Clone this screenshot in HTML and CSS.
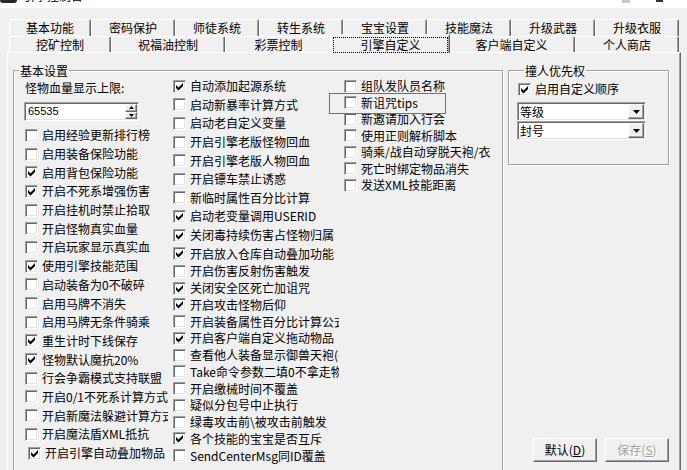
FILE: index.html
```html
<!DOCTYPE html>
<html lang="zh-CN">
<head>
<meta charset="utf-8">
<title>引擎自定义</title>
<link rel="stylesheet" href="styles.css">
</head>
<body>
<div class="titlebar">
  <span class="app-icon"></span>
  <span class="title"><span class="title-text">引擎控制台</span></span>
  <span class="tb-max"></span>
  <span class="tb-close"></span>
</div>

<div class="tabs">
  <div class="tab-row row-back">
    <div class="tab">基本功能</div>
    <div class="tab">密码保护</div>
    <div class="tab">师徒系统</div>
    <div class="tab">转生系统</div>
    <div class="tab">宝宝设置</div>
    <div class="tab">技能魔法</div>
    <div class="tab">升级武器</div>
    <div class="tab">升级衣服</div>
  </div>
  <div class="tab-row row-front">
    <div class="tab">挖矿控制</div>
    <div class="tab">祝福油控制</div>
    <div class="tab">彩票控制</div>
    <div class="tab active"><span class="focus">引擎自定义</span></div>
    <div class="tab">客户端自定义</div>
    <div class="tab">个人商店</div>
  </div>
</div>

<div class="page">
  <fieldset class="group basic">
    <legend>基本设置</legend>
    <div class="cols">
      <div class="col col1">
        <div class="field-label">怪物血量显示上限:</div>
        <div class="spin">
          <span class="spin-value">65535</span>
          <span class="spin-btns">
            <span class="mini-btn"><svg width="5" height="3" viewBox="0 0 5 3"><polygon points="2.5,0 5,3 0,3"/></svg></span>
            <span class="mini-btn"><svg width="5" height="3" viewBox="0 0 5 3"><polygon points="0,0 5,0 2.5,3"/></svg></span>
          </span>
        </div>
        <div class="checks c1">
          <label class="cb"><span class="box"></span><span class="txt">启用经验更新排行榜</span></label>
          <label class="cb"><span class="box"></span><span class="txt">启用装备保险功能</span></label>
          <label class="cb"><span class="box"><svg class="tick" width="11" height="11" viewBox="1 1 11 11"><path d="M3 5 L5.5 7.5 L10 3 L10 6 L5.5 10.5 L3 8 Z"/></svg></span><span class="txt">启用背包保险功能</span></label>
          <label class="cb"><span class="box"><svg class="tick" width="11" height="11" viewBox="1 1 11 11"><path d="M3 5 L5.5 7.5 L10 3 L10 6 L5.5 10.5 L3 8 Z"/></svg></span><span class="txt">开启不死系增强伤害</span></label>
          <label class="cb"><span class="box"></span><span class="txt">开启挂机时禁止拾取</span></label>
          <label class="cb"><span class="box"></span><span class="txt">开启怪物真实血量</span></label>
          <label class="cb"><span class="box"></span><span class="txt">开启玩家显示真实血</span></label>
          <label class="cb"><span class="box"><svg class="tick" width="11" height="11" viewBox="1 1 11 11"><path d="M3 5 L5.5 7.5 L10 3 L10 6 L5.5 10.5 L3 8 Z"/></svg></span><span class="txt">使用引擎技能范围</span></label>
          <label class="cb"><span class="box"></span><span class="txt">启动装备为0不破碎</span></label>
          <label class="cb"><span class="box"></span><span class="txt">启用马牌不消失</span></label>
          <label class="cb"><span class="box"></span><span class="txt">启用马牌无条件骑乘</span></label>
          <label class="cb"><span class="box"><svg class="tick" width="11" height="11" viewBox="1 1 11 11"><path d="M3 5 L5.5 7.5 L10 3 L10 6 L5.5 10.5 L3 8 Z"/></svg></span><span class="txt">重生计时下线保存</span></label>
          <label class="cb"><span class="box"><svg class="tick" width="11" height="11" viewBox="1 1 11 11"><path d="M3 5 L5.5 7.5 L10 3 L10 6 L5.5 10.5 L3 8 Z"/></svg></span><span class="txt">怪物默认魔抗20%</span></label>
          <label class="cb"><span class="box"></span><span class="txt">行会争霸模式支持联盟</span></label>
          <label class="cb"><span class="box"></span><span class="txt">开启0/1不死系计算方式</span></label>
          <label class="cb"><span class="box"></span><span class="txt">开启新魔法躲避计算方式</span></label>
          <label class="cb"><span class="box"></span><span class="txt">开启魔法盾XML抵抗</span></label>
          <label class="cb shifted"><span class="box"><svg class="tick" width="11" height="11" viewBox="1 1 11 11"><path d="M3 5 L5.5 7.5 L10 3 L10 6 L5.5 10.5 L3 8 Z"/></svg></span><span class="txt">开启引擎自动叠加物品</span></label>
        </div>
      </div>

      <div class="col col2">
        <div class="checks c2a">
          <label class="cb"><span class="box"><svg class="tick" width="11" height="11" viewBox="1 1 11 11"><path d="M3 5 L5.5 7.5 L10 3 L10 6 L5.5 10.5 L3 8 Z"/></svg></span><span class="txt">自动添加起源系统</span></label>
          <label class="cb"><span class="box"></span><span class="txt">启动新暴率计算方式</span></label>
          <label class="cb"><span class="box"></span><span class="txt">启动老自定义变量</span></label>
          <label class="cb"><span class="box"></span><span class="txt">开启引擎老版怪物回血</span></label>
          <label class="cb"><span class="box"></span><span class="txt">开启引擎老版人物回血</span></label>
          <label class="cb"><span class="box"></span><span class="txt">开启镖车禁止诱惑</span></label>
          <label class="cb"><span class="box"></span><span class="txt">新临时属性百分比计算</span></label>
          <label class="cb"><span class="box"><svg class="tick" width="11" height="11" viewBox="1 1 11 11"><path d="M3 5 L5.5 7.5 L10 3 L10 6 L5.5 10.5 L3 8 Z"/></svg></span><span class="txt">启动老变量调用USERID</span></label>
          <label class="cb"><span class="box"><svg class="tick" width="11" height="11" viewBox="1 1 11 11"><path d="M3 5 L5.5 7.5 L10 3 L10 6 L5.5 10.5 L3 8 Z"/></svg></span><span class="txt">关闭毒持续伤害占怪物归属</span></label>
          <label class="cb"><span class="box"><svg class="tick" width="11" height="11" viewBox="1 1 11 11"><path d="M3 5 L5.5 7.5 L10 3 L10 6 L5.5 10.5 L3 8 Z"/></svg></span><span class="txt">开启放入仓库自动叠加功能</span></label>
        </div>
        <div class="checks c2b">
          <label class="cb"><span class="box"></span><span class="txt">开启伤害反射伤害触发</span></label>
          <label class="cb"><span class="box"><svg class="tick" width="11" height="11" viewBox="1 1 11 11"><path d="M3 5 L5.5 7.5 L10 3 L10 6 L5.5 10.5 L3 8 Z"/></svg></span><span class="txt">关闭安全区死亡加诅咒</span></label>
          <label class="cb"><span class="box"><svg class="tick" width="11" height="11" viewBox="1 1 11 11"><path d="M3 5 L5.5 7.5 L10 3 L10 6 L5.5 10.5 L3 8 Z"/></svg></span><span class="txt">开启攻击怪物后仰</span></label>
          <label class="cb"><span class="box"></span><span class="txt">开启装备属性百分比计算公式</span></label>
          <label class="cb"><span class="box"><svg class="tick" width="11" height="11" viewBox="1 1 11 11"><path d="M3 5 L5.5 7.5 L10 3 L10 6 L5.5 10.5 L3 8 Z"/></svg></span><span class="txt">开启客户端自定义拖动物品</span></label>
          <label class="cb"><span class="box"></span><span class="txt">查看他人装备显示御兽天袍(衣)</span></label>
          <label class="cb"><span class="box"></span><span class="txt">Take命令参数二填0不拿走物品</span></label>
          <label class="cb"><span class="box"></span><span class="txt">开启缴械时间不覆盖</span></label>
          <label class="cb"><span class="box"></span><span class="txt">疑似分包号中止执行</span></label>
          <label class="cb"><span class="box"></span><span class="txt">绿毒攻击前\被攻击前触发</span></label>
          <label class="cb"><span class="box"><svg class="tick" width="11" height="11" viewBox="1 1 11 11"><path d="M3 5 L5.5 7.5 L10 3 L10 6 L5.5 10.5 L3 8 Z"/></svg></span><span class="txt">各个技能的宝宝是否互斥</span></label>
          <label class="cb"><span class="box"></span><span class="txt">SendCenterMsg同ID覆盖</span></label>
        </div>
      </div>

      <div class="col col3">
        <div class="checks c3">
          <label class="cb"><span class="box"></span><span class="txt">组队发队员名称</span></label>
          <label class="cb"><span class="box"></span><span class="txt">新诅咒tips</span></label>
          <label class="cb"><span class="box"></span><span class="txt">新邀请加入行会</span></label>
          <label class="cb"><span class="box"></span><span class="txt">使用正则解析脚本</span></label>
          <label class="cb"><span class="box"></span><span class="txt">骑乘/战自动穿脱天袍/衣</span></label>
          <label class="cb"><span class="box"></span><span class="txt">死亡时绑定物品消失</span></label>
          <label class="cb"><span class="box"></span><span class="txt">发送XML技能距离</span></label>
        </div>
      </div>
    </div>
  </fieldset>

  <div class="side">
    <fieldset class="group prio">
      <legend>撞人优先权</legend>
      <label class="cb prio-cb"><span class="box"><svg class="tick" width="11" height="11" viewBox="1 1 11 11"><path d="M3 5 L5.5 7.5 L10 3 L10 6 L5.5 10.5 L3 8 Z"/></svg></span><span class="txt">启用自定义顺序</span></label>
      <div class="combo first"><span class="combo-text">等级</span><span class="drop-btn"><svg width="7" height="4" viewBox="0 0 7 4"><polygon points="0,0 7,0 3.5,4"/></svg></span></div>
      <div class="combo"><span class="combo-text">封号</span><span class="drop-btn"><svg width="7" height="4" viewBox="0 0 7 4"><polygon points="0,0 7,0 3.5,4"/></svg></span></div>
    </fieldset>
    <div class="buttons">
      <button class="btn" type="button">默认(<u>D</u>)</button>
      <button class="btn" type="button" disabled>保存(<u>S</u>)</button>
    </div>
  </div>
</div>

<div class="mark"></div>
</body>
</html>
```
FILE: styles.css
```css
* { box-sizing: border-box; }
html, body { margin: 0; padding: 0; }
body {
  width: 687px;
  height: 470px;
  overflow: hidden;
  background: #f0f0f0;
  color: #000;
  font-family: "Noto Sans CJK SC", "Noto Sans", sans-serif;
  font-size: 12px;
  position: relative;
}

/* title bar (only its bottom edge is visible) */
.titlebar {
  height: 8px;
  background: #fff;
  display: flex;
  align-items: flex-start;
  overflow: hidden;
}
.app-icon {
  width: 17px;
  height: 3px;
  background: #262626;
  border-radius: 0 0 6px 6px;
}
.title {
  margin-left: 6px;
  height: 2px;
  overflow: hidden;
}
.title-text {
  display: block;
  margin-top: -10px;
  line-height: 12px;
  font-size: 12px;
}
.tb-max {
  margin-left: auto;
  width: 8px;
  height: 3px;
  background: #c8c8c8;
}
.tb-close {
  margin-left: 26px;
  margin-right: 24px;
  width: 7px;
  height: 2px;
  background: #333;
}

/* tabs */
.tabs {
  margin: 11px 0 0 9px;
  width: 670px;
  position: relative;
  z-index: 1;
}
.tab-row { display: grid; }
.row-back { grid-template-columns: 82px repeat(7, 84px); }
.row-front { grid-template-columns: 102px 114px 107px 116px 127px 104px; }
.tab {
  border-top: 1px solid #fff;
  border-left: 1px solid #fff;
  border-right: 1px solid #696969;
  box-shadow: inset -1px 0 0 #a0a0a0;
  border-radius: 2px 2px 0 0;
  background: #f0f0f0;
  text-align: center;
  white-space: nowrap;
  overflow: hidden;
}
.row-back .tab { height: 17px; line-height: 16px; }
.row-front .tab { height: 16px; line-height: 15px; }
.row-front .tab.active {
  margin: -2px -2px -1px;
  height: 19px;
  position: relative;
  z-index: 2;
}
.focus {
  display: block;
  margin: 2px 1px 0 2px;
  height: 16px;
  line-height: 14px;
  border: 1px dotted #000;
}

/* page */
.page {
  margin-left: 7px;
  width: 674px;
  height: 440px;
  border-top: 1px solid #fff;
  border-left: 1px solid #fff;
  border-right: 1px solid #696969;
  box-shadow: inset -1px 0 0 #a0a0a0;
  padding: 11px 0 0 5px;
  display: flex;
  gap: 5px;
}

.group {
  margin: 0;
  padding: 0;
  min-width: 0;
  border: 1px solid #a0a0a0;
  box-shadow: 1px 1px 0 #fff, inset 1px 1px 0 #fff;
}
.group legend {
  padding: 0 1px;
  height: 13px;
  line-height: 13px;
  background: #f0f0f0;
}
.basic { width: 490px; height: 420px; }
.basic legend { margin-left: 5px; }

.cols {
  display: grid;
  grid-template-columns: 144px 167px 1fr;
  column-gap: 4px;
  padding-left: 10px;
  align-items: start;
}
.col { overflow: hidden; }

.field-label {
  margin-top: 5px;
  padding-left: 1px;
  line-height: 12px;
  height: 12px;
}

.spin {
  margin-top: 8px;
  width: 115px;
  height: 19px;
  display: flex;
  background: #fff;
  border: 1px solid;
  border-color: #a0a0a0 #fff #fff #a0a0a0;
  box-shadow: inset 1px 1px 0 #696969, inset -1px -1px 0 #e3e3e3;
  padding: 1px;
}
.spin-value {
  flex: 1;
  padding-left: 2px;
  font-family: "Liberation Sans", Arial, sans-serif;
  font-size: 11px;
  line-height: 15px;
}
.spin-btns {
  width: 12px;
  display: flex;
  flex-direction: column;
}
.mini-btn {
  flex: 1;
  display: flex;
  align-items: center;
  justify-content: center;
  background: #f0f0f0;
  border: 1px solid;
  border-color: #fff #696969 #696969 #fff;
  box-shadow: inset -1px -1px 0 #a0a0a0;
}
.mini-btn svg, .drop-btn svg { display: block; fill: #000; }

/* checkboxes */
.checks { display: flex; flex-direction: column; }
.c1 { margin-top: 5px; }
.c1 .cb { height: 18.7px; }
.c2a .cb { height: 18.6px; }
.c2b .cb { height: 16.75px; }
.c3 { padding-top: 1px; }
.c3 .cb { height: 16.5px; }

.cb {
  display: flex;
  align-items: center;
  padding-left: 1px;
  white-space: nowrap;
  overflow: hidden;
}
.cb.shifted { padding-left: 4px; }
.box {
  flex: none;
  width: 13px;
  height: 13px;
  display: flex;
  background: #fff;
  border: 1px solid;
  border-color: #a0a0a0 #fff #fff #a0a0a0;
  box-shadow: inset 1px 1px 0 #696969, inset -1px -1px 0 #e3e3e3;
}
.tick { display: block; fill: #000; }
.txt {
  margin-left: 4px;
  line-height: 12px;
}

/* right side */
.side {
  width: 161px;
  height: 420px;
  display: flex;
  flex-direction: column;
}
.prio {
  width: 161px;
  height: 101px;
  padding-left: 8px;
}
.prio legend { margin-left: 7px; }
.prio-cb { margin-top: 4px; height: 16px; }

.combo {
  width: 129px;
  height: 19px;
  display: flex;
  background: #fff;
  border: 1px solid;
  border-color: #a0a0a0 #fff #fff #a0a0a0;
  box-shadow: inset 1px 1px 0 #696969, inset -1px -1px 0 #e3e3e3;
  padding: 1px;
}
.combo.first { margin-top: 5px; }
.combo-text {
  flex: 1;
  line-height: 15px;
  padding-left: 1px;
}
.drop-btn {
  width: 16px;
  display: flex;
  align-items: center;
  justify-content: center;
  background: #f0f0f0;
  border: 1px solid;
  border-color: #fff #696969 #696969 #fff;
  box-shadow: inset -1px -1px 0 #a0a0a0;
}

.buttons {
  margin-top: auto;
  margin-bottom: 22px;
  display: flex;
  justify-content: flex-end;
  gap: 8px;
}
.btn {
  width: 64px;
  height: 24px;
  margin: 0;
  padding: 0;
  font: inherit;
  font-size: 12px;
  color: #000;
  background: #f0f0f0;
  border: 1px solid;
  border-color: #fff #696969 #696969 #fff;
  box-shadow: inset -1px -1px 0 #a0a0a0;
  border-radius: 0;
  line-height: 20px;
}
.btn:disabled {
  color: #a0a0a0;
  text-shadow: 1px 1px 0 #fff;
}

/* red annotation box drawn over the dialog */
.mark {
  position: absolute;
  left: 329px;
  top: 93px;
  width: 117px;
  height: 21px;
  border: 1px solid #e5403b;
  pointer-events: none;
}
```
